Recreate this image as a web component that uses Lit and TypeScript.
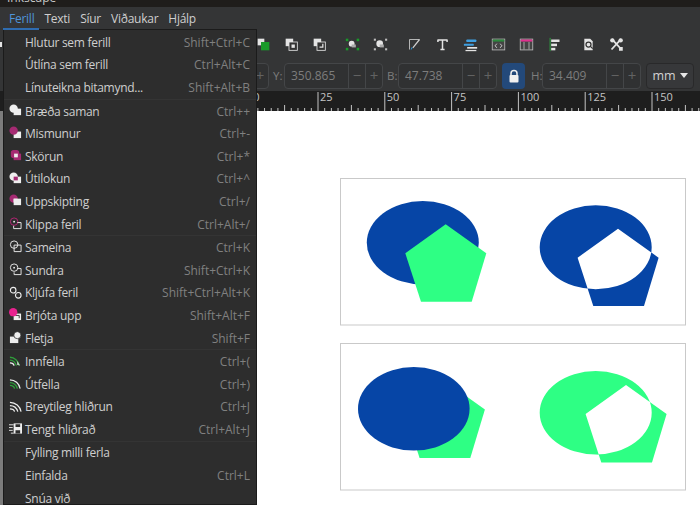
import { LitElement, css, html, svg } from 'lit';
import { customElement } from 'lit/decorators.js';

const MAG = '#a52a72';
const HOT = '#e8228f';
const GRN = '#2f9e3a';
const W = '#eeeeee';

// boolean-op icons share the circle + square layout, 14x14 box
const menuIcons: Record<string, unknown> = {
  union: svg`<circle cx="5" cy="5" r="4.5" fill=${W}/><rect x="5" y="5" width="8" height="7" fill=${W}/>`,
  diff: svg`<rect x="5" y="6" width="8" height="7" fill=${W}/><circle cx="5" cy="5" r="4.5" fill=${MAG}/>`,
  inter: svg`<rect x="2" y="1" width="9" height="9" rx="3" fill=${MAG}/><rect x="5" y="5" width="8" height="7" fill=${MAG}/><rect x="5.5" y="5" width="4" height="4" fill=${W}/>`,
  excl: svg`<circle cx="5" cy="5" r="4.5" fill=${W}/><rect x="5" y="5" width="8" height="7" fill=${W}/><rect x="5" y="5" width="4.5" height="4" fill=${MAG}/>`,
  divi: svg`<circle cx="5" cy="5" r="4.5" fill=${MAG}/><rect x="5" y="5" width="8" height="7" fill=${W}/><path d="M5 5h4v1l-3 3H5z" fill=${W}/>`,
  cut: svg`<circle cx="5.5" cy="5" r="4" fill="none" stroke=${HOT} stroke-opacity=".75"/><circle cx="5.5" cy="5" r="1" fill=${W}/><path d="M9 6h4v6.5H5V9.5" fill="none" stroke=${W}/>`,
  combine: svg`<circle cx="5.5" cy="5" r="4" fill="none" stroke=${W}/><path d="M5.5 5.5h7.5v7H5.500z" fill="none" stroke=${W}/>`,
  breakp: svg`<circle cx="5.5" cy="5" r="4" fill="none" stroke=${W}/><circle cx="5.5" cy="5" r="1" fill=${W}/><path d="M9.5 6h3.5v6.5H5.5V10" fill="none" stroke=${W}/>`,
  split: svg`<circle cx="4.5" cy="4.5" r="3" fill="none" stroke=${W} stroke-width="1.2"/><circle cx="10" cy="10" r="3" fill="none" stroke=${W} stroke-width="1.2"/>`,
  shatter: svg`<rect x="5" y="6" width="8" height="7" fill=${W}/><path d="M7 8h4v3" fill="none" stroke="#333"/><circle cx="4.5" cy="4.5" r="4.5" fill=${HOT}/>`,
  flatten: svg`<rect x="1" y="6" width="9" height="7" fill=${W}/><circle cx="9" cy="4.5" r="3.8" fill=${W} stroke="#2d2d2d" stroke-width=".8"/>`,
  inset: svg`<path d="M1 3.5c5 0 9 4 10 9M1 6.5c4 0 6 3 7 6" fill="none" stroke=${GRN} stroke-width="1.4"/><path d="M1 9.5c2 0 4 1 4.500 3" fill="none" stroke=${W} stroke-width="1.400"/><path d="M9 7.500l3 5-3.500-1z" fill=${W} opacity=".75"/>`,
  outset: svg`<path d="M1 3c5.500 0 10 4 11 9.500" fill="none" stroke=${W} stroke-width="1.300"/><path d="M1 6c4 0 7 3 8 6.500M1 9c2.500 0 4.500 1.500 5 3.500" fill="none" stroke=${GRN} stroke-width="1.500"/>`,
  dyn: svg`<path d="M1 2.500c6 0 11 4.500 12 10M1 6c4.500 0 7.500 3 8.500 6.500M1 9.500c2.500 0 4.500 1.200 5 3" fill="none" stroke=${W} stroke-width="1.300"/>`,
  linked: svg`<path d="M0 3h5M0 6h4M0 9h4M2 12h3" stroke=${W} stroke-width="1"/><path d="M5 1.500h9v11H5z" fill=${W}/><path d="M7 2.500h5v3H7zM7 9h5v3.500H7z" fill="#2d2d2d"/>`,
};

type Row = { t: string; k?: string; i?: string };

const groups: Row[][] = [
  [
    { t: 'Hlutur sem ferill', k: 'Shift+Ctrl+C' },
    { t: 'Útlína sem ferill', k: 'Ctrl+Alt+C' },
    { t: 'Línuteikna bitamynd...', k: 'Shift+Alt+B' },
  ],
  [
    { t: 'Bræða saman', k: 'Ctrl++', i: 'union' },
    { t: 'Mismunur', k: 'Ctrl+-', i: 'diff' },
    { t: 'Skörun', k: 'Ctrl+*', i: 'inter' },
    { t: 'Útilokun', k: 'Ctrl+^', i: 'excl' },
    { t: 'Uppskipting', k: 'Ctrl+/', i: 'divi' },
    { t: 'Klippa feril', k: 'Ctrl+Alt+/', i: 'cut' },
  ],
  [
    { t: 'Sameina', k: 'Ctrl+K', i: 'combine' },
    { t: 'Sundra', k: 'Shift+Ctrl+K', i: 'breakp' },
    { t: 'Kljúfa feril', k: 'Shift+Ctrl+Alt+K', i: 'split' },
    { t: 'Brjóta upp', k: 'Shift+Alt+F', i: 'shatter' },
    { t: 'Fletja', k: 'Shift+F', i: 'flatten' },
  ],
  [
    { t: 'Innfella', k: 'Ctrl+(', i: 'inset' },
    { t: 'Útfella', k: 'Ctrl+)', i: 'outset' },
    { t: 'Breytileg hliðrun', k: 'Ctrl+J', i: 'dyn' },
    { t: 'Tengt hliðrað', k: 'Ctrl+Alt+J', i: 'linked' },
  ],
  [
    { t: 'Fylling milli ferla' },
    { t: 'Einfalda', k: 'Ctrl+L' },
    { t: 'Snúa við' },
  ],
];

// toolbar icons on an 18x18 box; null marks a group separator
const G = '#1a9a2a';
const L = '#e4e4e4';
const toolIcons: (unknown | null)[] = [
  svg`<rect x="2" y="2" width="8" height="8" fill=${L}/><rect x="6" y="6" width="10" height="10" fill=${G}/>`,
  svg`<rect x="2" y="2" width="9" height="9" fill=${L}/><rect x="6" y="6" width="10" height="10" fill="#333" stroke=${L}/><rect x="9" y="9" width="4" height="4" fill=${L}/>`,
  svg`<rect x="2" y="2" width="9" height="9" fill=${L}/><rect x="6" y="6" width="10" height="10" fill="#333" stroke=${L}/><path d="M9 12h4V8" fill="none" stroke=${L} stroke-width="1.500"/>`,
  null,
  svg`<g fill=${G}><rect x="1" y="2" width="3" height="3"/><rect x="14" y="2" width="3" height="3"/><rect x="1" y="13" width="3" height="3"/><rect x="14" y="13" width="3" height="3"/></g><circle cx="8" cy="8" r="3.500" fill=${L}/><rect x="8" y="9" width="5" height="3.500" fill="#aaa"/>`,
  svg`<g fill="#bdbdbd"><rect x="1" y="2" width="2.500" height="2.500"/><rect x="14.500" y="2" width="2.500" height="2.500"/><rect x="1" y="13.500" width="2.500" height="2.500"/><rect x="14.500" y="13.500" width="2.500" height="2.500"/></g><circle cx="8" cy="8" r="4" fill=${L}/><rect x="8" y="9" width="5" height="3.500" fill="#aaa"/>`,
  null,
  svg`<path d="M3 15V3h12" fill="none" stroke="#cfcfcf" stroke-width="1"/><path d="M15 3 7 13" stroke="#cfcfcf" stroke-width="1.500"/><path d="M7 13l-2.500 3 .5-3.500z" fill="#2f8fd0"/>`,
  svg`<path d="M3.500 3.500h11M3.500 3v3M14.500 3v3M9 3.500v12M6.500 15h5" fill="none" stroke=${L} stroke-width="1.800"/>`,
  svg`<rect x="4" y="3" width="12" height="3" rx="1" fill="#3f9fe0"/><rect x="1" y="8" width="12" height="2.500" rx="1" fill="#3f9fe0"/><rect x="5" y="12" width="12" height="2" fill=${L}/><rect x="3" y="15.500" width="13" height="1.500" fill=${L}/>`,
  svg`<rect x="1.500" y="2.500" width="15" height="13" fill="#444" stroke="#bbb"/><rect x="2" y="3" width="14" height="2.500" fill="#2c8a3c"/><path d="M7 8 5 10.500 7 13M11 8l2 2.500-2 2.500" fill="none" stroke=${L}/>`,
  svg`<rect x="1.500" y="2.500" width="15" height="13" fill="#444" stroke="#bbb"/><rect x="2" y="3" width="14" height="2.500" fill="#e0308f"/><path d="M6 6v9M12 6v9" stroke="#bbb"/>`,
  svg`<rect x="3" y="1" width="1.500" height="16" fill="#2c8a3c"/><rect x="5" y="3" width="10" height="3" fill=${L}/><rect x="5" y="8" width="7" height="3" fill=${L}/><rect x="5" y="13" width="5" height="3" fill=${L}/>`,
  null,
  svg`<path d="M4 2h7l3 3v11H4z" fill=${L}/><circle cx="9" cy="9" r="3" fill="none" stroke="#333" stroke-width="1.500"/><path d="M11 11l3 3" stroke="#333" stroke-width="1.500"/>`,
  svg`<path d="M3.500 2.500 15 15M14.500 2.500 3 15" stroke=${L} stroke-width="2.200"/><circle cx="4" cy="4" r="2.600" fill=${L}/><circle cx="14" cy="4" r="2.600" fill=${L}/><rect x="12" y="12" width="4.500" height="4.500" fill=${L}/>`,
];

const ticks = () => {
  const step = 66.8 / 10;
  const out: unknown[] = [];
  for (let i = 0; i < 70; i++) {
    const x = 251.2 + i * step;
    const h = i % 10 === 0 ? 19 : i % 5 === 0 ? 6 : 3;
    out.push(svg`<line x1=${x} x2=${x} y1=${20 - h} y2="20" stroke="#c4c4c4" stroke-width="1"/>`);
    if (i % 10 === 0) {
      out.push(svg`<text x=${x + 2} y="10" class="rl">${i * 2.5}</text>`);
    }
  }
  return out;
};

const pent = (x: number, y: number) =>
  [[0, 0], [40.6, 29], [26, 77.4], [-24.7, 77.4], [-40.4, 29]].map(([a, b]) => `${x + a},${y + b}`).join(' ');

// pentagon outline as a subpath, for even-odd fills
const pentD = (x: number, y: number) => `M${pent(x, y).split(' ').join('L')}Z`;
const ellD = (cx: number, cy: number, rx: number, ry: number) =>
  `M${cx - rx} ${cy}a${rx} ${ry} 0 1 0 ${rx * 2} 0a${rx} ${ry} 0 1 0 ${-rx * 2} 0Z`;

const BLUE = '#0645a6';
const MINT = '#2eff84';

@customElement('app-root')
export class AppRoot extends LitElement {
  static styles = css`
    :host {
      display: block;
      position: relative;
      width: 700px;
      height: 505px;
      overflow: hidden;
      background: #343536;
      font-family: 'Open Sans', 'Noto Sans', sans-serif;
      font-size: 12px;
      color: #cfcfcf;
    }
    .title {
      height: 7px;
      background: #1f1d1b;
      overflow: hidden;
      padding-left: 7px;
      color: #c8c8c8;
    }
    .title span {
      display: block;
      margin-top: -9px;
      line-height: 14px;
    }
    .menubar {
      display: flex;
      height: 23px;
      padding-left: 9px;
      gap: 10px;
      align-items: center;
      font-size: 12px;
      letter-spacing: -0.25px;
      color: #cfcfcf;
    }
    .menubar .on {
      color: #4f94d8;
    }
    .tools {
      display: flex;
      box-sizing: border-box;
      height: 30px;
      padding: 0 0 2px 249px;
      align-items: center;
    }
    .tool {
      width: 28.2px;
      display: flex;
      justify-content: center;
      flex: none;
    }
    .tool svg {
      width: 15px;
      height: 15px;
    }
    .sep {
      width: 5px;
      flex: none;
    }
    .fields {
      display: flex;
      height: 31px;
      align-items: center;
      padding-left: 239px;
      color: #7d7d7d;
      font-size: 12px;
    }
    .lbl {
      width: 11px;
      flex: none;
      margin-left: 4px;
      white-space: nowrap;
      font-size: 11.5px;
    }
    .field {
      width: 99px;
      height: 26px;
      flex: none;
      box-sizing: border-box;
      border: 1px solid #444648;
      border-radius: 4px;
      background: #303132;
      display: flex;
      align-items: center;
      padding-left: 6px;
    }
    .field .v {
      flex: 1;
    }
    .field .b {
      width: 16px;
      height: 24px;
      border-left: 1px solid #444648;
      text-align: center;
      line-height: 23px;
      font-size: 15px;
      color: #626262;
    }
    .field.cut {
      width: 30px;
      padding: 0;
      justify-content: flex-end;
    }
    .lock {
      width: 23px;
      height: 26px;
      flex: none;
      margin: 0 2px 0 5px;
      border-radius: 4px;
      background: #23497a;
      display: flex;
      align-items: center;
      justify-content: center;
    }
    .unit {
      width: 48px;
      height: 26px;
      flex: none;
      box-sizing: border-box;
      margin-left: 5px;
      border: 1px solid #29292a;
      border-radius: 4px;
      background: #37383a;
      color: #d2d2d2;
      display: flex;
      align-items: center;
      justify-content: center;
      gap: 4px;
      font-size: 12.5px;
    }
    .caret {
      border-left: 4.5px solid transparent;
      border-right: 4.5px solid transparent;
      border-top: 5px solid #e6e6e6;
    }
    .ruler {
      display: block;
      width: 700px;
      height: 20px;
      background: #1e1e1e;
    }
    .rl {
      font-size: 11px;
      fill: #c4c4c4;
    }
    .workspace {
      display: flex;
      height: 394px;
    }
    .strip {
      width: 3px;
      flex: none;
      background: #7c7c7c;
    }
    .canvas {
      display: block;
      width: 697px;
      height: 394px;
      background: #fff;
    }
    .peek {
      position: absolute;
      left: 0;
      top: 42px;
      width: 2px;
      height: 5px;
      background: #e4e4e4;
    }
    .menu {
      position: absolute;
      left: 3px;
      top: 29px;
      width: 254px;
      height: 476px;
      box-sizing: border-box;
      background: #2d2d2d;
      border: 1px solid #1b1b1b;
      padding-top: 1px;
    }
    .tab {
      position: absolute;
      left: 3px;
      top: 28px;
      width: 36px;
      height: 2px;
      background: #2f6cb0;
    }
    .group + .group {
      border-top: 1px solid #343434;
    }
    .row {
      height: 22.6px;
      display: flex;
      align-items: center;
      justify-content: space-between;
      padding: 0 6px 0 21px;
      position: relative;
      white-space: nowrap;
    }
    .row .lab {
      letter-spacing: -0.28px;
    }
    .row svg {
      position: absolute;
      left: 5px;
      top: 4px;
      width: 13px;
      height: 13px;
    }
    .key {
      color: #808080;
    }
  `;

  render() {
    return html`
      <div class="title"><span>Inkscape</span></div>
      <div class="menubar">
        <span class="on">Ferill</span><span>Texti</span><span>Síur</span><span>Viðaukar</span><span>Hjálp</span>
      </div>
      <div class="tools">
        ${toolIcons.map((ic) =>
          ic === null
            ? html`<div class="sep"></div>`
            : html`<div class="tool"><svg viewBox="0 0 18 18">${ic}</svg></div>`,
        )}
      </div>
      <div class="fields">
        <div class="field cut"><span class="b">+</span></div>
        <span class="lbl">Y:</span>
        <div class="field"><span class="v">350.865</span><span class="b">−</span><span class="b">+</span></div>
        <span class="lbl">B:</span>
        <div class="field"><span class="v">47.738</span><span class="b">−</span><span class="b">+</span></div>
        <div class="lock">
          <svg width="12" height="14" viewBox="0 0 12 14">
            <path d="M3 7V4.500a3 3 0 0 1 6 0V7" fill="none" stroke="#f0f0f0" stroke-width="1.500" />
            <rect x="1.500" y="6" width="9" height="7.500" rx="1" fill="#f0f0f0" />
          </svg>
        </div>
        <span class="lbl">H:</span>
        <div class="field"><span class="v">34.409</span><span class="b">−</span><span class="b">+</span></div>
        <div class="unit">mm<span class="caret"></span></div>
      </div>
      <svg class="ruler" viewBox="0 0 700 20">${ticks()}</svg>
      <div class="workspace">
        <div class="strip"></div>
        <svg class="canvas" viewBox="3 111 697 394">
          <rect x="340.500" y="178.500" width="345" height="146.500" fill="#fff" stroke="#c9c9c9" />
          <rect x="340.500" y="343.500" width="345" height="146.500" fill="#fff" stroke="#c9c9c9" />
          <ellipse cx="422.800" cy="242.700" rx="56" ry="41.700" fill=${BLUE} />
          <polygon points=${pent(445.7, 224.3)} fill=${MINT} />
          <path d="${ellD(595.7, 247.3, 56, 42)}${pentD(618, 228.7)}" fill-rule="evenodd" fill=${BLUE} />
          <polygon points=${pent(444.3, 380.6)} fill=${MINT} />
          <ellipse cx="413.800" cy="408.800" rx="55.800" ry="41.800" fill=${BLUE} />
          <path d="${ellD(595.7, 412.7, 56, 41.7)}${pentD(626, 385)}" fill-rule="evenodd" fill=${MINT} />
        </svg>
      </div>
      <div class="peek"></div>
      <div class="menu">
        ${groups.map(
          (g) => html`<div class="group">
            ${g.map(
              (r) => html`<div class="row">
                ${r.i ? html`<svg viewBox="0 0 14 14">${menuIcons[r.i]}</svg>` : ''}
                <span class="lab">${r.t}</span><span class="key">${r.k ?? ''}</span>
              </div>`,
            )}
          </div>`,
        )}
      </div>
      <div class="tab"></div>
    `;
  }
}
